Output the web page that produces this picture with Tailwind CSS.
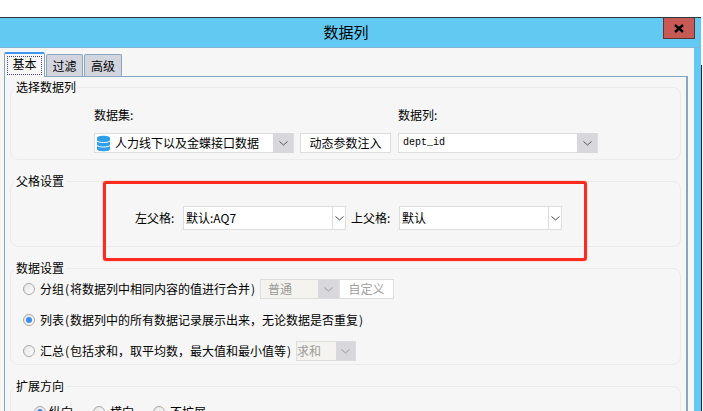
<!DOCTYPE html>
<html lang="zh-CN">
<head>
    <meta charset="UTF-8">
    <meta name="viewport" content="width=device-width, initial-scale=1.0">
    <title>数据列</title>
    <script src="https://cdn.jsdelivr.net/npm/@tailwindcss/browser@4"></script>
</head>
<body class="relative w-[703px] h-[411px] overflow-hidden bg-white text-black text-[12px] leading-[16px] font-['Noto_Sans_CJK_SC','Liberation_Sans',sans-serif]">
    <div class="h-[17px]"></div>

    <!-- Dialog window -->
    <div class="w-[701px] h-[394px] border-t border-[#2b3a40] flex flex-col">
        <!-- Title bar -->
        <div class="relative h-[30px] shrink-0 bg-[#62caf2] border-b border-[#7fb6d6] pr-[9px] pb-[2px] flex items-center justify-center">
            <span class="text-[15px]">数据列</span>
            <button class="absolute top-0 right-[6px] w-[32px] h-[21px] bg-[#c75a54] border border-t-0 border-[#5e3330] flex items-center justify-center">
                <svg width="10" height="9" viewBox="0 0 10 9"><path d="M1 1l8 7M9 1L1 8" stroke="#000" stroke-width="2.4" fill="none"/></svg>
            </button>
        </div>

        <div class="flex flex-1 min-h-0">
            <div class="w-[694px] bg-[#f6f6f6] pl-[4px] pr-[6px] pt-[4px] flex flex-col">
                <!-- Tabs -->
                <div class="flex items-end h-[24px] shrink-0">
                    <div class="relative z-10 -mb-px w-[41px] h-[25px] bg-[#f6f6f6] border-t-2 border-l border-r border-t-[#3f97f0] border-l-[#8aa5c0] border-r-[#8aa5c0] rounded-t-[2px] p-[2px]">
                        <div class="h-[19px] pb-[3px] border border-dotted border-[#4a4a7a] flex items-center justify-center">基本</div>
                    </div>
                    <div class="w-[37px] h-[22px] ml-px bg-[#d2d4de] border border-b-0 border-[#8aa5c0] rounded-t-[2px] flex items-center justify-center">过滤</div>
                    <div class="w-[38px] h-[22px] ml-px bg-[#d2d4de] border border-b-0 border-[#8aa5c0] rounded-t-[2px] flex items-center justify-center">高级</div>
                </div>

                <!-- Tab pane -->
                <div class="flex-1 min-h-0 overflow-hidden border-t border-l border-r-2 border-[#8aa5c0] pl-[5px] pr-[5px] pt-[2px] flex flex-col gap-[13px]">

                    <fieldset class="h-[81px] shrink-0 border border-[#ebebeb] rounded-lg">
                        <legend class="ml-[3px] px-[2px]">选择数据列</legend>
                        <div class="pl-[83px] mt-[12px] flex">
                            <span class="w-[304px]">数据集:</span>
                            <span>数据列:</span>
                        </div>
                        <div class="pl-[83px] mt-[10px] flex">
                            <div class="w-[200px] h-[20px] bg-white border border-[#dddddd] flex items-center">
                                <svg class="ml-[1px] shrink-0" width="15" height="17" viewBox="0 0 15 17">
                                    <path d="M1 3c0-3 13-3 13 0v11c0 3-13 3-13 0z" fill="#2f9fe8"/>
                                    <path d="M1 6c2 2 11 2 13 0M1 10.500c2 2 11 2 13 0" stroke="#fff" fill="none"/>
                                </svg>
                                <span class="ml-[4px] flex-1 whitespace-nowrap">人力线下以及金蝶接口数据</span>
                                <span class="w-[20px] h-[20px] shrink-0 bg-[#d8d8dc] flex items-center justify-center">
                                    <svg width="9" height="5" viewBox="0 0 9 5"><path d="M.5.500l4 3.500 4-3.500" stroke="#555" fill="none"/></svg>
                                </span>
                            </div>
                            <button class="w-[91px] h-[20px] ml-[6px] bg-white border border-[#dddddd] flex items-center justify-center">动态参数注入</button>
                            <div class="w-[200px] h-[20px] ml-[7px] bg-white border border-[#dddddd] flex items-center">
                                <span class="ml-[4px] flex-1 text-[10px] font-['Liberation_Mono',monospace]">dept_id</span>
                                <span class="w-[20px] h-[20px] shrink-0 bg-[#d8d8dc] flex items-center justify-center">
                                    <svg width="9" height="5" viewBox="0 0 9 5"><path d="M.5.500l4 3.500 4-3.500" stroke="#555" fill="none"/></svg>
                                </span>
                            </div>
                        </div>
                    </fieldset>

                    <fieldset class="h-[74px] shrink-0 border border-[#ebebeb] rounded-lg">
                        <legend class="ml-[3px] px-[2px]">父格设置</legend>
                        <div class="pl-[124px] mt-[17px] flex items-center">
                            <span class="w-[48px] shrink-0">左父格:</span>
                            <div class="w-[163px] h-[24px] bg-white border border-[#dddddd] flex items-center">
                                <span class="ml-[2px] flex-1">默认:AQ7</span>
                                <span class="w-[13px] h-full shrink-0 border-l border-[#dddddd] flex items-center justify-center">
                                    <svg width="9" height="5" viewBox="0 0 9 5"><path d="M.5.500l4 3.500 4-3.500" stroke="#444" fill="none"/></svg>
                                </span>
                            </div>
                            <span class="w-[48px] ml-[5px] shrink-0">上父格:</span>
                            <div class="w-[163px] h-[24px] bg-white border border-[#dddddd] flex items-center">
                                <span class="ml-[2px] flex-1">默认</span>
                                <span class="w-[13px] h-full shrink-0 border-l border-[#dddddd] flex items-center justify-center">
                                    <svg width="9" height="5" viewBox="0 0 9 5"><path d="M.5.500l4 3.500 4-3.500" stroke="#444" fill="none"/></svg>
                                </span>
                            </div>
                        </div>
                    </fieldset>

                    <fieldset class="h-[105px] shrink-0 border border-[#ebebeb] rounded-lg">
                        <legend class="ml-[3px] px-[2px]">数据设置</legend>
                        <div class="pl-[12px] mt-[3px] flex flex-col gap-[11px]">
                            <div class="h-[20px] flex items-center">
                                <span class="w-[12px] h-[12px] shrink-0 rounded-full border border-[#a8a8a8] bg-gradient-to-br from-[#e4e4e4] to-white"></span>
                                <span class="ml-[5px] whitespace-nowrap">分组<span class="inline-block w-[6px] text-center">(</span>将数据列中相同内容的值进行合并<span class="inline-block w-[6px] text-center">)</span></span>
                                <div class="w-[79px] h-[20px] ml-[4px] bg-[#f4f3ef] border border-[#dddddd] flex items-center text-[#9a9a9a]">
                                    <span class="ml-[7px] flex-1">普通</span>
                                    <span class="w-[20px] h-full shrink-0 bg-[#d8d8dc] flex items-center justify-center">
                                        <svg width="9" height="5" viewBox="0 0 9 5"><path d="M.5.500l4 3.500 4-3.500" stroke="#999" fill="none"/></svg>
                                    </span>
                                </div>
                                <button class="w-[55px] h-[20px] bg-white border border-[#dddddd] text-[#a0a0a0] flex items-center justify-center">自定义</button>
                            </div>
                            <div class="h-[20px] flex items-center">
                                <span class="w-[12px] h-[12px] shrink-0 rounded-full border border-[#a8a8a8] bg-gradient-to-br from-[#e4e4e4] to-white flex items-center justify-center">
                                    <span class="w-[6px] h-[6px] rounded-full bg-[#3b8df0]"></span>
                                </span>
                                <span class="ml-[5px] whitespace-nowrap">列表<span class="inline-block w-[6px] text-center">(</span>数据列中的所有数据记录展示出来，无论数据是否重复<span class="inline-block w-[6px] text-center">)</span></span>
                            </div>
                            <div class="h-[20px] flex items-center">
                                <span class="w-[12px] h-[12px] shrink-0 rounded-full border border-[#a8a8a8] bg-gradient-to-br from-[#e4e4e4] to-white"></span>
                                <span class="ml-[5px] whitespace-nowrap">汇总<span class="inline-block w-[6px] text-center">(</span>包括求和，取平均数，最大值和最小值等<span class="inline-block w-[6px] text-center">)</span></span>
                                <div class="w-[60px] h-[20px] ml-[4px] bg-[#f4f3ef] border border-[#dddddd] flex items-center text-[#9a9a9a]">
                                    <span class="flex-1">求和</span>
                                    <span class="w-[19px] h-full shrink-0 bg-[#d8d8dc] flex items-center justify-center">
                                        <svg width="9" height="5" viewBox="0 0 9 5"><path d="M.5.500l4 3.500 4-3.500" stroke="#999" fill="none"/></svg>
                                    </span>
                                </div>
                            </div>
                        </div>
                    </fieldset>

                    <fieldset class="h-[100px] shrink-0 border border-[#ebebeb] rounded-lg">
                        <legend class="ml-[3px] px-[2px]">扩展方向</legend>
                        <div class="pl-[23px] mt-[10px] flex items-center h-[16px]">
                            <span class="w-[12px] h-[12px] shrink-0 rounded-full border border-[#a8a8a8] bg-gradient-to-br from-[#e4e4e4] to-white flex items-center justify-center">
                                <span class="w-[6px] h-[6px] rounded-full bg-[#3b8df0]"></span>
                            </span>
                            <span class="ml-[3px]">纵向</span>
                            <span class="w-[12px] h-[12px] ml-[20px] shrink-0 rounded-full border border-[#a8a8a8] bg-gradient-to-br from-[#e4e4e4] to-white"></span>
                            <span class="ml-[5px]">横向</span>
                            <span class="w-[12px] h-[12px] ml-[19px] shrink-0 rounded-full border border-[#a8a8a8] bg-gradient-to-br from-[#e4e4e4] to-white"></span>
                            <span class="ml-[5px]">不扩展</span>
                        </div>
                    </fieldset>
                </div>
            </div>
            <div class="w-[7px] shrink-0 bg-[#62caf2]"></div>
        </div>
    </div>

    <!-- Window edge behind the dialog -->
    <div class="absolute left-[701px] top-[65px] w-px h-[346px] bg-[#1c2a3a]"></div>

    <!-- Red annotation box -->
    <div class="absolute left-[103px] top-[181px] w-[484px] h-[80px] border-[3px] border-[#ff2a1e] rounded-[3px] shadow-[0_0_1px_#ff2a1e]"></div>
</body>
</html>
